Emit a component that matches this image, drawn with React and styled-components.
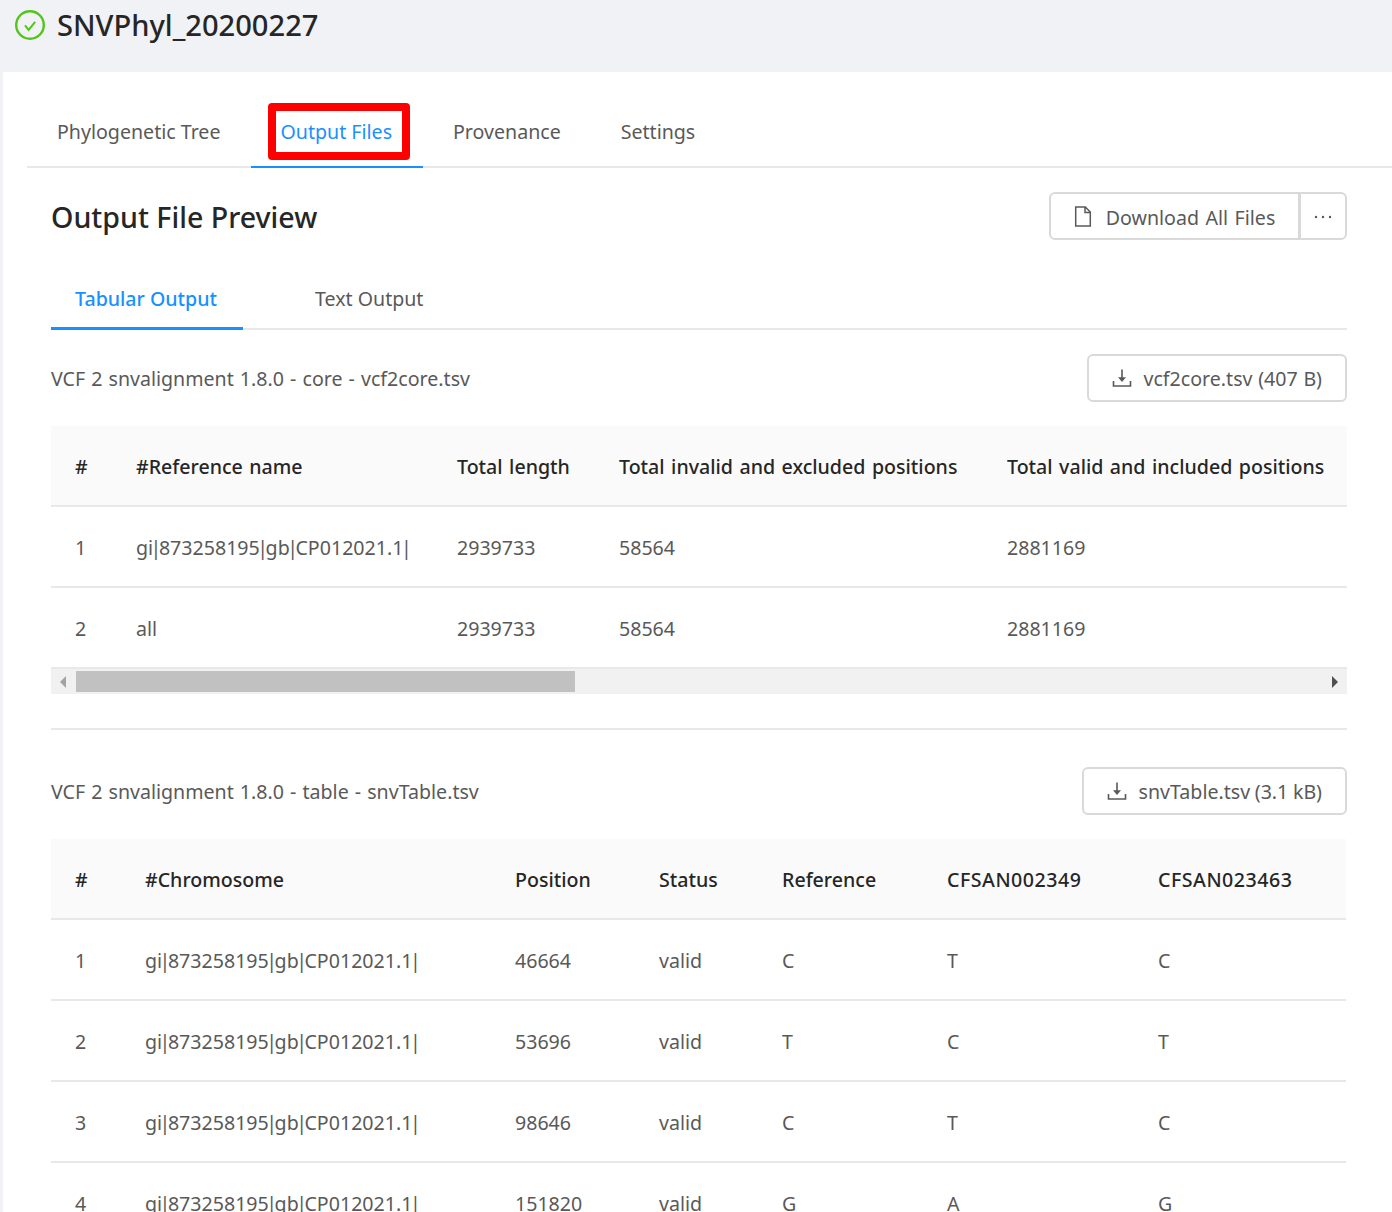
import styled, { createGlobalStyle } from "styled-components"

const GlobalStyle = createGlobalStyle`
  html, body {
    margin: 0;
    height: 1212px;
    overflow: hidden;
    background: #f0f2f5;
    font-family: "Noto Sans", "Open Sans", sans-serif;
    color: #595959;
  }
  * { box-sizing: border-box; }
`

const tabs = ["Phylogenetic Tree", "Output Files", "Provenance", "Settings"]

const coreColumns = [61, 321, 162, 388, 364]
const coreHeaders = ["#", "#Reference name", "Total length", "Total invalid and excluded positions", "Total valid and included positions"]
const coreRows = [
  ["1", "gi|873258195|gb|CP012021.1|", "2939733", "58564", "2881169"],
  ["2", "all", "2939733", "58564", "2881169"],
]

const snvColumns = [70, 370, 144, 123, 165, 211, 212]
const snvHeaders = ["#", "#Chromosome", "Position", "Status", "Reference", "CFSAN002349", "CFSAN023463"]
const snvRows = [
  ["1", "gi|873258195|gb|CP012021.1|", "46664", "valid", "C", "T", "C"],
  ["2", "gi|873258195|gb|CP012021.1|", "53696", "valid", "T", "C", "T"],
  ["3", "gi|873258195|gb|CP012021.1|", "98646", "valid", "C", "T", "C"],
  ["4", "gi|873258195|gb|CP012021.1|", "151820", "valid", "G", "A", "G"],
]

function CheckIcon() {
  return (
    <svg width="30" height="30" viewBox="0 0 30 30" fill="none">
      <circle cx="15" cy="15" r="13.8" stroke="#52c41a" strokeWidth="2.4" />
      <path d="M10 15.4l3.6 4.4 6.6-8" stroke="#52c41a" strokeWidth="2" />
    </svg>
  )
}

function FileIcon() {
  return (
    <svg width="18" height="21" viewBox="0 0 18 21" fill="none">
      <path d="M1.7 1h9.6l5 5v14H1.7z M11 1v5.4h5.3" stroke="#595959" strokeWidth="1.5" />
    </svg>
  )
}

function DownloadIcon() {
  return (
    <svg width="20" height="20" viewBox="0 0 20 20" fill="none">
      <path d="M10 1.5v11" stroke="#595959" strokeWidth="1.6" />
      <path d="M6 9.2h8L10 14z" fill="#595959" />
      <path d="M1.5 13v5h17v-5" stroke="#595959" strokeWidth="1.6" />
    </svg>
  )
}

function EllipsisIcon() {
  return (
    <svg width="18" height="4" viewBox="0 0 18 4" fill="#595959">
      <circle cx="2" cy="2" r="1.2" />
      <circle cx="9" cy="2" r="1.2" />
      <circle cx="16" cy="2" r="1.2" />
    </svg>
  )
}

// the pipes are much narrower in the reference font
function CellText({ text }) {
  const parts = text.split("|")
  return parts.map((part, i) => (
    <span key={i}>
      {part}
      {i < parts.length - 1 && <Pipe>|</Pipe>}
    </span>
  ))
}

function DataTable({ columns, headers, rows }) {
  return (
    <Table>
      <colgroup>
        {columns.map((w, i) => <Col key={i} $w={w} />)}
      </colgroup>
      <thead>
        <tr>{headers.map((h) => <Th key={h} $wide={h.startsWith("CFSAN")}>{h}</Th>)}</tr>
      </thead>
      <tbody>
        {rows.map((row) => (
          <tr key={row[0]}>
            {row.map((c, i) => <Td key={i}><CellText text={c} /></Td>)}
          </tr>
        ))}
      </tbody>
    </Table>
  )
}

export default function App() {
  return (
    <>
      <GlobalStyle />
      <Header>
        <CheckIcon />
        <Title>SNVPhyl_20200227</Title>
      </Header>
      <Content>
        <TabBar>
          {tabs.map((t) => (
            <Tab key={t} $active={t === "Output Files"}>
              {t}
              {t === "Output Files" && <Highlight />}
            </Tab>
          ))}
        </TabBar>
        <Body>
          <PreviewHead>
            <Heading>Output File Preview</Heading>
            <ButtonGroup>
              <MainButton><FileIcon /><span>Download All Files</span></MainButton>
              <MoreButton><EllipsisIcon /></MoreButton>
            </ButtonGroup>
          </PreviewHead>
          <SubTabs>
            <SubTab $active>Tabular Output</SubTab>
            <SubTab>Text Output</SubTab>
          </SubTabs>
          <FileRow $top={24}>
            <FileName>VCF 2 snvalignment 1.8.0 - core - vcf2core.tsv</FileName>
            <FileButton><DownloadIcon />vcf2core.tsv (407 B)</FileButton>
          </FileRow>
          <TableWrap>
            <DataTable columns={coreColumns} headers={coreHeaders} rows={coreRows} />
          </TableWrap>
          <Scrollbar>
            <ArrowLeft />
            <Thumb />
            <ArrowRight />
          </Scrollbar>
          <Divider />
          <FileRow $top={37}>
            <FileName>VCF 2 snvalignment 1.8.0 - table - snvTable.tsv</FileName>
            <FileButton $tight><DownloadIcon />snvTable.tsv (3.1 kB)</FileButton>
          </FileRow>
          <TableWrap>
            <DataTable columns={snvColumns} headers={snvHeaders} rows={snvRows} />
          </TableWrap>
        </Body>
      </Content>
    </>
  )
}

const Header = styled.header`
  height: 72px;
  padding: 10px 0 0 15px;
  display: flex;
  align-items: flex-start;
  gap: 12px;
`

const Title = styled.h1`
  margin: 0;
  font-size: 29.1px;
  line-height: 30px;
  font-weight: 500;
  color: #262626;
`

const Content = styled.main`
  margin-left: 3px;
  background: #fff;
  height: 1140px;
  padding: 31px 0 0 24px;
  overflow: hidden;
`

const TabBar = styled.nav`
  display: flex;
  height: 65px;
  border-bottom: 2px solid #e8e8e8;
`

const Tab = styled.div`
  position: relative;
  height: 65px;
  padding: 0 ${(p) => (p.$active ? "31px" : "30px")} 6px ${(p) => (p.$active ? "29px" : "30px")};
  display: flex;
  align-items: center;
  font-size: 19.6px;
  color: ${(p) => (p.$active ? "#1890ff" : "#595959")};
  border-bottom: 2px solid ${(p) => (p.$active ? "#1890ff" : "transparent")};

  &:first-child {
    padding-right: 31px;
  }
`

const Highlight = styled.span`
  position: absolute;
  left: 17px;
  top: 0;
  width: 142px;
  height: 57px;
  border: 8px solid #ff0000;
  border-radius: 4px;
`

const Body = styled.div`
  padding: 0 45px 0 24px;
`

const PreviewHead = styled.div`
  display: flex;
  justify-content: space-between;
  align-items: center;
  padding-top: 24px;
  height: 72px;
`

const Heading = styled.h2`
  margin: 0;
  padding-top: 2px;
  font-size: 28.6px;
  font-weight: 500;
  color: #262626;
  line-height: 48px;
`

const ButtonGroup = styled.div`
  display: flex;
  height: 48px;
`

const BaseButton = styled.button`
  height: 48px;
  background: #fff;
  border: 2px solid #d9d9d9;
  font-family: inherit;
  font-size: 19.6px;
  word-spacing: 1.4px;
  color: #595959;
  display: flex;
  align-items: center;
  justify-content: center;
  padding: 0;
`

const MainButton = styled(BaseButton)`
  width: 251px;
  gap: 14px;
  border-radius: 6px 0 0 6px;

  span {
    padding-top: 2px;
  }
`

const MoreButton = styled(BaseButton)`
  width: 47px;
  padding-top: 2px;
  border-left: 1px solid #d9d9d9;
  border-radius: 0 6px 6px 0;
`

const SubTabs = styled.div`
  display: flex;
  height: 66px;
  margin-top: 24px;
  border-bottom: 2px solid #e8e8e8;
`

const SubTab = styled.div`
  width: ${(p) => (p.$active ? "192px" : "auto")};
  height: 66px;
  padding: ${(p) => (p.$active ? "6px 24px 0" : "2px 72px 0")};
  display: flex;
  align-items: center;
  font-size: 19.6px;
  font-weight: ${(p) => (p.$active ? 500 : 400)};
  color: ${(p) => (p.$active ? "#1890ff" : "#595959")};
  border-bottom: ${(p) => (p.$active ? "3px solid #1890ff" : "none")};
`

const FileRow = styled.div`
  display: flex;
  justify-content: space-between;
  align-items: center;
  height: 48px;
  margin: ${(p) => p.$top}px 0 24px;
`

const FileName = styled.div`
  font-size: 19.6px;
  word-spacing: 1px;
`

const FileButton = styled(BaseButton)`
  padding: 0 23px;
  gap: 12px;
  border-radius: 6px;
  word-spacing: ${(p) => (p.$tight ? "-0.5px" : "0.6px")};
`

const TableWrap = styled.div`
  overflow: hidden;
`

const Table = styled.table`
  table-layout: fixed;
  border-collapse: collapse;
  width: max-content;
  font-size: 19.6px;
`

const Col = styled.col`
  width: ${(p) => p.$w}px;
`

const Th = styled.th`
  height: 80px;
  padding: 2px 0 0 24px;
  text-align: left;
  font-weight: 500;
  white-space: nowrap;
  word-spacing: 1.4px;
  letter-spacing: ${(p) => (p.$wide ? "0.5px" : "0")};
  color: #262626;
  background: #fafafa;
  border-bottom: 2px solid #e8e8e8;
`

const Td = styled.td`
  height: 81px;
  padding: 2px 0 0 24px;
  white-space: nowrap;
  border-bottom: 2px solid #e8e8e8;
`

const Pipe = styled.span`
  margin: 0 -2.5px;
`

const Scrollbar = styled.div`
  height: 25px;
  background: #f1f1f1;
  padding: 2px 0 0;
  display: flex;
  align-items: flex-start;
`

const ArrowLeft = styled.span`
  width: 0;
  height: 0;
  margin: 5px 10px 0 9px;
  border-style: solid;
  border-width: 6px 6px 6px 0;
  border-color: transparent #a3a3a3 transparent transparent;
`

const Thumb = styled.span`
  width: 499px;
  height: 21px;
  background: #c1c1c1;
`

const ArrowRight = styled.span`
  width: 0;
  height: 0;
  margin: 5px 9px 0 auto;
  border-style: solid;
  border-width: 6px 0 6px 6px;
  border-color: transparent transparent transparent #505050;
`

const Divider = styled.hr`
  margin: 34px 0 0;
  border: none;
  height: 2px;
  background: #e8e8e8;
`
